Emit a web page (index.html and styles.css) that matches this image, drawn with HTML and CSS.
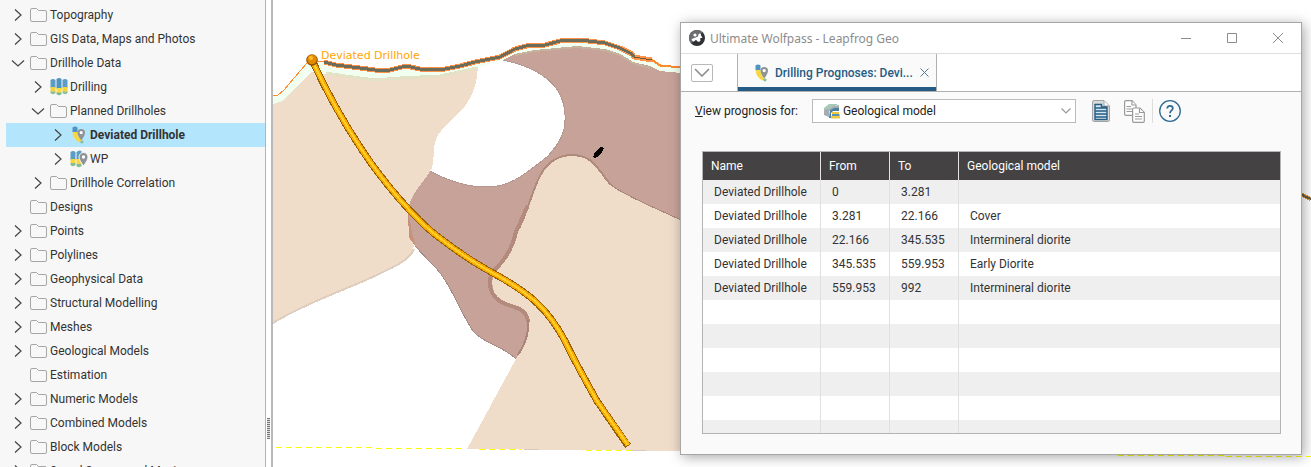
FILE: index.html
```html
<!DOCTYPE html>
<html lang="en">
<head>
  <meta charset="UTF-8" />
  <meta name="viewport" content="width=device-width,initial-scale=1.0"/>
  <title>Ultimate Wolfpass - Leapfrog Geo</title>
  <link rel="stylesheet" href="styles.css">
</head>
<body>
  <!-- Shared icons -->
  <svg class="icon-defs" aria-hidden="true">
    <symbol id="chevron" viewBox="0 0 14 14"><path d="M4 1.5 L10 7 L4 12.5" fill="none" stroke="#444" stroke-width="1.2"/></symbol>
    <symbol id="chevron-down" viewBox="0 0 14 14"><path d="M1 4.500 L7 10 L13 4.500" fill="none" stroke="#444" stroke-width="1.2"/></symbol>
    <symbol id="folder" viewBox="0 0 18 16"><path d="M2 1.500 H6.500 L8.500 3.500 H15 Q16.500 3.500 16.500 5 V13 Q16.500 14.500 15 14.500 H2 Q.5 14.500 .5 13 V3 Q.5 1.500 2 1.500Z" fill="none" stroke="#a6a6a6"/></symbol>
    <symbol id="drilling" viewBox="0 0 18 18">
      <path d="M.5 2 Q3 .2 5.500 2 V10 H.5Z M12.500 2 Q15 .2 17.500 2 V10 H12.500Z" fill="#5b9dc7"/>
      <path d="M.5 9 H5.500 V14 H.5Z M12.500 9 H17.500 V14 H12.500Z" fill="#f2d43c"/>
      <path d="M.5 13.500 H5.500 V15 Q3 17.500 .5 15Z M12.500 13.500 H17.500 V15 Q15 17.500 12.500 15Z" fill="#8cc0a0"/>
      <path d="M6.500 1 Q9 -.8 11.500 1 V11 H6.500Z" fill="#4f93c1"/>
      <path d="M6.500 10 H11.500 V15 H6.500Z" fill="#ffdc3c"/>
      <path d="M6.500 14.500 H11.500 V16 Q9 18.600 6.500 16Z" fill="#7db892"/>
    </symbol>
    <symbol id="planned" viewBox="0 0 18 18">
      <path d="M2.500 1.500 Q5 -.5 7.500 1.500 V6 H2.500Z" fill="#4f93c1"/>
      <path d="M2.500 6 H7.500 Q7.500 12 12 14 L10 16.500 Q2.500 13 2.500 6Z" fill="#f8d840"/>
      <path d="M10 15.500 L12.500 14.500 Q14.500 15.500 12.500 17.500 Q10.500 17.800 10 15.500Z" fill="#7fc09a"/>
      <path d="M11.200 14.500 Q7.500 9.500 7.500 6.700 A3.700 3.700 0 0 1 15 6.700 Q15 9.500 11.200 14.500Z" fill="#8f9396"/>
      <circle cx="11.200" cy="6.600" r="1.600" fill="#fff"/>
    </symbol>
    <symbol id="planned-group" viewBox="0 0 18 18">
      <path d="M.5 2 Q3 .2 5.500 2 V10 H.5Z M6.500 2 Q9 -.5 11.500 1 V9 H6.500Z" fill="#5b9dc7"/>
      <path d="M.5 9 H5.500 V13 H.5Z M6.500 9 H11.500 V14 H6.500Z" fill="#f5d63c"/>
      <path d="M.5 13 H5.500 V15 Q3 17.500 .5 15Z M6.500 14 H11.500 V16 Q9 18.500 6.500 16Z" fill="#85bd98"/>
      <path d="M13.500 16 Q9 10 9 7 A4.500 4.500 0 0 1 18 7 Q18 10 13.500 16Z" fill="#8f9396" stroke="#f7f7f7"/>
      <circle cx="13.500" cy="7" r="1.700" fill="#fff"/>
    </symbol>
  </svg>

  <div class="app">
    <!-- Project tree -->
    <ul class="tree">
      <li class="row"><button class="toggle" aria-label="Expand"><svg><use href="#chevron"/></svg></button><svg class="icon"><use href="#folder"/></svg>Topography</li>
      <li class="row"><button class="toggle" aria-label="Expand"><svg><use href="#chevron"/></svg></button><svg class="icon"><use href="#folder"/></svg>GIS Data, Maps and Photos</li>
      <li class="row"><button class="toggle" aria-label="Collapse"><svg><use href="#chevron-down"/></svg></button><svg class="icon"><use href="#folder"/></svg>Drillhole Data</li>
      <li class="row level-1"><button class="toggle" aria-label="Expand"><svg><use href="#chevron"/></svg></button><svg class="icon icon-tall"><use href="#drilling"/></svg>Drilling</li>
      <li class="row level-1"><button class="toggle" aria-label="Collapse"><svg><use href="#chevron-down"/></svg></button><svg class="icon"><use href="#folder"/></svg>Planned Drillholes</li>
      <li class="row level-2 selected"><button class="toggle" aria-label="Expand"><svg><use href="#chevron"/></svg></button><svg class="icon icon-tall"><use href="#planned"/></svg>Deviated Drillhole</li>
      <li class="row level-2"><button class="toggle" aria-label="Expand"><svg><use href="#chevron"/></svg></button><svg class="icon icon-tall"><use href="#planned-group"/></svg>WP</li>
      <li class="row level-1"><button class="toggle" aria-label="Expand"><svg><use href="#chevron"/></svg></button><svg class="icon"><use href="#folder"/></svg>Drillhole Correlation</li>
      <li class="row leaf"><svg class="icon"><use href="#folder"/></svg>Designs</li>
      <li class="row"><button class="toggle" aria-label="Expand"><svg><use href="#chevron"/></svg></button><svg class="icon"><use href="#folder"/></svg>Points</li>
      <li class="row"><button class="toggle" aria-label="Expand"><svg><use href="#chevron"/></svg></button><svg class="icon"><use href="#folder"/></svg>Polylines</li>
      <li class="row"><button class="toggle" aria-label="Expand"><svg><use href="#chevron"/></svg></button><svg class="icon"><use href="#folder"/></svg>Geophysical Data</li>
      <li class="row"><button class="toggle" aria-label="Expand"><svg><use href="#chevron"/></svg></button><svg class="icon"><use href="#folder"/></svg>Structural Modelling</li>
      <li class="row"><button class="toggle" aria-label="Expand"><svg><use href="#chevron"/></svg></button><svg class="icon"><use href="#folder"/></svg>Meshes</li>
      <li class="row"><button class="toggle" aria-label="Expand"><svg><use href="#chevron"/></svg></button><svg class="icon"><use href="#folder"/></svg>Geological Models</li>
      <li class="row leaf"><svg class="icon"><use href="#folder"/></svg>Estimation</li>
      <li class="row"><button class="toggle" aria-label="Expand"><svg><use href="#chevron"/></svg></button><svg class="icon"><use href="#folder"/></svg>Numeric Models</li>
      <li class="row"><button class="toggle" aria-label="Expand"><svg><use href="#chevron"/></svg></button><svg class="icon"><use href="#folder"/></svg>Combined Models</li>
      <li class="row"><button class="toggle" aria-label="Expand"><svg><use href="#chevron"/></svg></button><svg class="icon"><use href="#folder"/></svg>Block Models</li>
      <li class="row"><button class="toggle" aria-label="Expand"><svg><use href="#chevron"/></svg></button><svg class="icon"><use href="#folder"/></svg>Saved Scenes and Movies</li>
    </ul>

    <div class="splitter"><span class="grip"></span></div>

    <!-- 3D scene -->
    <div class="scene">
      <svg class="section" viewBox="273 0 1038 467" preserveAspectRatio="xMinYMin slice">
        <g shape-rendering="crispEdges">
          <!-- Early diorite -->
          <path d="M430 171 C450 182 467 187 487 187 C512 187 527 172 547 157 C560 143 566 132 565 115 C564 85 540 68 503 60 L515 52 L545 46 L577 44 L610 49 L635 60 L660 69 H690 V222 L560 300 L516 359 C499 343 485 345 473 331 C456 305 450 280 430 262 L415 246 L400 210Z" fill="#c7a299"/>
          <path d="M415 246 L430 262 C450 280 456 305 473 331 C485 345 499 343 516 359" fill="none" stroke="#a38a84"/>
          <path d="M430 171 C450 182 467 187 487 187 C512 187 527 172 547 157 C560 143 566 132 565 115 C564 85 540 68 503 60" fill="none" stroke="#b39790"/>
          <!-- Intermineral diorite, left -->
          <path d="M273 104 L283 101 L311 72 L330 75 L375 79 L400 77 L440 75 L478 67 C477 88 470 104 455 117 C440 131 434 136 434 152 C433 165 432 170 430 171 C424 183 409 194 408 212 L410 235 L414 246 C411 256 405 262 385 271 C355 287 310 300 273 323Z" fill="#efdcc9"/>
          <path d="M414 249 C411 256 405 262 385 271 C355 287 310 300 273 323" fill="none" stroke="#dfcdbd" stroke-width="2"/>
          <path d="M408 213 L412 235 L415 245 L410 238Z" fill="#c8917c" stroke="#c8917c"/>
          <!-- Intermineral diorite, right -->
          <path d="M690 225 C665 212 625 196 611 185 C597 169 594 156 571 156 C533 158 535 202 517 232 C514 252 506 261 494 273 C490 285 493 297 503 302 C515 307 529 308 529 322 C530 338 521 350 516 359 L467 449 L690 451Z" fill="#efdcc9"/>
          <path d="M681 220 C660 210 625 196 611 185" fill="none" stroke="#a88778"/>
          <path d="M611 185 C597 169 594 155 571 155 C533 157 535 202 517 232" fill="none" stroke="#b08a7a" stroke-width="2"/>
          <path d="M528 206 C523 215 520 224 516 232 C512 250 504 262 492 272 C487 285 491 297 503 303 C515 308 527 308 528 322" fill="none" stroke="#b38b7d" stroke-width="4"/>
          <path d="M528 320 C529 336 524 345 518 355" fill="none" stroke="#a98478" stroke-width="2"/>
          <!-- Cover -->
          <path d="M273 96 L278 95 L284 90 L305 64 L312 60 L332 64 L350 67 L375 70 L390 69 L406 66 L420 69 L445 69 L475 62 L500 57 L515 49 L530 45 L545 45 L560 41 L580 41 L605 44 L620 49 L633 56 L652 61 L661 66 L681 67 V73 L660 71 L650 66 L633 62 L620 54 L605 49 L577 46 L535 50 L515 54 L503 60 L478 67 L440 74 L400 77 L375 79 L330 75 L311 71 L283 101 L273 104Z" fill="#f1fff0"/>
          <path d="M326 73 L345 76 L375 80 L400 78 L440 76 L477 68" fill="none" stroke="#e4e2c6" stroke-width="3"/>
          <path d="M515 55 L535 51 L577 47 L605 50 L620 55 L633 63 L650 68" fill="none" stroke="#c6b19d" stroke-width="2"/>
          <!-- Topography -->
          <path d="M273 96 L278 95 L284 90 L300 71 L307 63 L312 61 L324 61" fill="none" stroke="#ff8b2c"/>
          <path d="M324 62 L336 65 L352 67 L375 70 L390 70 L406 66 L420 69 L445 69 L460 66 L475 62 L500 57 L515 49 L530 45 L545 45 L560 41 L580 40 L605 43 L620 48 L632 54 L634 57 L652 60" fill="none" stroke="#ff9248" stroke-width="5"/>
          <path d="M652 60 L661 66 L681 67" fill="none" stroke="#ff8b2c" stroke-width="2"/>
          <path d="M324 62 L336 65 L352 67 L375 70 L390 70 L406 66 L420 69 L445 69 L460 66 L475 62 L500 57 L515 49 L530 45 L545 45 L560 41 L580 40 L605 43 L620 48 L632 54 L634 57" fill="none" stroke="#6b6d5a" stroke-width="3"/>
          <path d="M634 57 L652 60" fill="none" stroke="#6b5a3a"/>
          <path d="M1301 194 L1304 196 L1311 199" fill="none" stroke="#e6a03a" stroke-width="4"/>
          <path d="M1301 194 L1304 196 L1311 199" fill="none" stroke="#5f5c4b" stroke-width="2"/>
          <!-- Drillhole trace -->
          <g fill="none">
            <path class="tube-edge" d="M312 60 C328 95 346 126 362 150 C384 183 414 218 437 236 C466 258 480 266 500 277 C530 294 548 309 565 341 C575 362 587 383 597 401 L628 446"/>
            <path class="tube-body" d="M312 60 C328 95 346 126 362 150 C384 183 414 218 437 236 C466 258 480 266 500 277 C530 294 548 309 565 341 C575 362 587 383 597 401 L628 445"/>
            <path class="tube-light" d="M312 60 C328 95 346 126 362 150 C384 183 414 218 437 236 C466 258 480 266 500 277 C530 294 548 309 565 341 C575 362 587 383 597 401 L628 445"/>
          </g>
          <ellipse cx="598.500" cy="152.500" rx="7" ry="2.700" transform="rotate(-48 598.500 152.500)" fill="#050303"/>
        </g>
        <circle cx="312" cy="60" r="5.800" fill="#8a4f00"/>
        <circle cx="312" cy="59.500" r="4.800" fill="#e28a00"/>
        <circle cx="311" cy="58" r="2" fill="#ffbe2a"/>
        <!-- Section extent -->
        <g class="extent">
          <path d="M276 447.500 H374"/>
          <path d="M376 448.500 H466"/>
          <path d="M479 449.500 H521"/>
          <path d="M586 450.500 H631"/>
          <path d="M1010 454.500 H1118"/>
          <path d="M1118 455.500 H1226"/>
          <path d="M1226 456.500 H1311"/>
        </g>
        <path d="M524 449.500 H539 M631 450.500 H646" fill="none" stroke="#d8c9ba"/>
        <text class="hole-label" x="321" y="59">Deviated Drillhole</text>
      </svg>

      <!-- Prognosis window -->
      <div class="window">
        <div class="titlebar">
          <svg class="logo" viewBox="0 0 16 16"><circle cx="8" cy="8" r="8" fill="#2f3134"/><path d="M0 8 A8 8 0 0 1 13.500 2.300 L2.300 13.500 A8 8 0 0 1 0 8Z" fill="#6b6d70"/><path d="M2.500 9.500 Q3.500 8 5.500 8 L9 6.500 Q9 4 10.500 3.500 Q12.500 3.500 12 5.500 L13.500 7.500 L11 8.500 L11.500 10.500 Q10.500 12.500 8.500 11.500 L7 9.800 L5 11.500 Q3 11.500 2.500 9.500Z" fill="#fff"/><circle cx="6" cy="5" r="1.600" fill="#fff"/></svg>
          <span class="title">Ultimate Wolfpass - Leapfrog Geo</span>
          <button class="win-btn" aria-label="Minimize"><svg viewBox="0 0 10 10"><path d="M0 5.500 H10"/></svg></button>
          <button class="win-btn" aria-label="Maximize"><svg viewBox="0 0 10 10"><path d="M.5 .5 H9.500 V9.500 H.5Z"/></svg></button>
          <button class="win-btn" aria-label="Close"><svg viewBox="0 0 10 10"><path d="M0 0 L10 10 M10 0 L0 10"/></svg></button>
        </div>

        <div class="tabs">
          <button class="tab-menu" aria-label="Tab list"><svg viewBox="0 0 16 9"><path d="M1 1 L8 8 L15 1" fill="none" stroke="#8c8c8c" stroke-width="1.600"/></svg></button>
          <div class="tab">
            <svg class="tab-icon"><use href="#planned"/></svg>
            <span>Drilling Prognoses: Devi...</span>
            <button class="tab-close" aria-label="Close tab"><svg viewBox="0 0 9 9"><path d="M.5 .5 L8.500 8.500 M8.500 .5 L.5 8.500" stroke="#4d7b9b" fill="none"/></svg></button>
          </div>
        </div>

        <div class="toolbar">
          <label for="prognosis"><u>V</u>iew prognosis for:</label>
          <div class="select-box">
            <svg class="model-icon" viewBox="0 0 16 16"><path d="M0 5 L5 1 H14 L10 3.500 L4 6 V8 H0Z" fill="#a5c9b6"/><path d="M0 7 L4 6 L10 3 L15 2 V5 L8 6 L5 8 V14 L0 12Z" fill="#a3adb3"/><path d="M6 7 L10 5 H15 V8 H9 L7 10 V15 H5Z" fill="#4f7f9f"/><path d="M8 9 H15 V11 H8Z M7 13 H16 V15.500 H7Z" fill="#f0c83a"/><path d="M8 11 H15.500 V13 H8Z" fill="#5b93b8"/></svg>
            <select id="prognosis"><option>Geological model</option></select>
            <svg class="select-arrow" viewBox="0 0 10 6"><path d="M.5 .5 L5 5 L9.500 .5" fill="none" stroke="#999" stroke-width="1.200"/></svg>
          </div>
          <button class="tool" aria-label="Table"><svg width="18" height="22" viewBox="0 0 18 22"><path d="M2 .5 H12 L17.500 6 V20 Q17.500 21.500 16 21.500 H2 Q.5 21.500 .5 20 V2 Q.5 .5 2 .5Z" fill="#d9dbdc" stroke="#a3a3a3"/><path d="M12 1 V6 H17" fill="#fff" stroke="#a3a3a3"/><path d="M3 4.500 H9.500 V7 H15 V19.500 H3Z" fill="#d3e6f2" stroke="#265c84" stroke-width="1.400"/><path d="M3 8 H15 M3 11 H15 M3 14 H15 M3 17 H15" stroke="#265c84" stroke-width="1.500"/></svg></button>
          <button class="tool tool-copy" aria-label="Copy"><svg width="21" height="23" viewBox="0 0 21 23"><g fill="#fff" stroke="#999" stroke-width="1.200"><path d="M2 .6 H8 L12 5 V14 Q12 15.400 10.500 15.400 H2 Q.6 15.400 .6 14 V2 Q.6 .6 2 .6Z"/><path d="M8 1 V5 H12 M2.500 6.500 H7 M2.500 9 H8 M2.500 11.500 H8"/><path d="M10 8 H16 L20.300 12.500 V21 Q20.300 22.300 19 22.300 H10 Q8.600 22.300 8.600 21 V9.500 Q8.600 8 10 8Z"/><path d="M15.500 8.500 V12.500 H20 M11 14 H15 M11 16.500 H18 M11 19 H18"/></g></svg></button>
          <span class="divider"></span>
          <button class="tool" aria-label="Help"><svg width="22" height="22" viewBox="0 0 22 22" fill="none" stroke="#2f6b93"><circle cx="11" cy="11" r="10.300" stroke-width="1.300"/><path d="M8.200 8.500 Q8.300 5.800 11 5.800 Q13.800 5.800 13.800 8.200 Q13.800 9.500 12.300 10.600 Q11 11.600 11 13.300" stroke-width="1.700"/><path d="M11 15 V17" stroke-width="2"/></svg></button>
        </div>

        <div class="table-wrap">
          <table>
            <thead>
              <tr><th class="col-name">Name</th><th class="col-num">From</th><th class="col-num">To</th><th>Geological model</th></tr>
            </thead>
            <tbody>
              <tr><td>Deviated Drillhole</td><td>0</td><td>3.281</td><td></td></tr>
              <tr><td>Deviated Drillhole</td><td>3.281</td><td>22.166</td><td>Cover</td></tr>
              <tr><td>Deviated Drillhole</td><td>22.166</td><td>345.535</td><td>Intermineral diorite</td></tr>
              <tr><td>Deviated Drillhole</td><td>345.535</td><td>559.953</td><td>Early Diorite</td></tr>
              <tr><td>Deviated Drillhole</td><td>559.953</td><td>992</td><td>Intermineral diorite</td></tr>
              <tr><td></td><td></td><td></td><td></td></tr>
              <tr><td></td><td></td><td></td><td></td></tr>
              <tr><td></td><td></td><td></td><td></td></tr>
              <tr><td></td><td></td><td></td><td></td></tr>
              <tr><td></td><td></td><td></td><td></td></tr>
              <tr><td></td><td></td><td></td><td></td></tr>
            </tbody>
          </table>
        </div>
      </div>
    </div>
  </div>
</body>
</html>
```
FILE: styles.css
```css
/* ---------- Global Styles ---------- */
* {
  box-sizing: border-box;
}
body {
  margin: 0;
  background: #fff;
  color: #333;
  font-family: Roboto, sans-serif;
  font-size: 12px;
  overflow: hidden;
}
button {
  background: none;
  border: none;
  padding: 0;
  cursor: pointer;
}
svg {
  display: block;
}
.icon-defs {
  position: absolute;
  width: 0;
  height: 0;
}
.app {
  display: flex;
  height: 100vh;
}

/* ---------- Project Tree ---------- */
.tree {
  width: 266px;
  flex-shrink: 0;
  margin: 0;
  padding: 3px 0 0 6px;
  list-style: none;
  background: #f7f7f7;
  border-right: 1px solid #b4b4b4;
  overflow: hidden;
}
.row {
  display: flex;
  align-items: center;
  height: 24px;
  padding-left: 5px;
  white-space: nowrap;
}
.level-1 {
  padding-left: 25px;
}
.level-2 {
  padding-left: 45px;
}
.leaf {
  padding-left: 24px;
}
.selected {
  background: #b3e5fc;
  font-weight: bold;
}
.toggle {
  width: 14px;
  height: 14px;
  margin-right: 5px;
}
.toggle svg {
  width: 14px;
  height: 14px;
}
.icon {
  width: 18px;
  height: 16px;
  margin-right: 2px;
}
.icon-tall {
  height: 18px;
}

/* ---------- Splitter ---------- */
.splitter {
  display: flex;
  align-items: flex-end;
  width: 7px;
  flex-shrink: 0;
  padding: 0 0 28px 1px;
  border-right: 2px solid #b9b9b9;
}
.grip {
  width: 3px;
  height: 21px;
  background: repeating-linear-gradient(#777 0 1px, #ddd 1px 2px);
}

/* ---------- Scene ---------- */
.scene {
  position: relative;
  flex: 1;
  overflow: hidden;
}
.section {
  width: 100%;
  height: 100%;
}
.tube-edge {
  stroke: #946000;
  stroke-width: 7;
}
.tube-body {
  stroke: #f8aa00;
  stroke-width: 5;
}
.tube-light {
  stroke: #ffcf28;
  stroke-width: 2;
}
.extent {
  fill: none;
  stroke: #ffff00;
  stroke-dasharray: 6 4;
}
.hole-label {
  font-family: "DejaVu Sans", sans-serif;
  font-size: 11px;
  fill: #ffa500;
}

/* ---------- Window ---------- */
.window {
  position: absolute;
  top: 22px;
  right: 9px;
  bottom: 12px;
  width: 622px;
  display: flex;
  flex-direction: column;
  background: #fafafa;
  border: 1px solid #a6a6a6;
  box-shadow: 2px 2px 12px rgba(0, 0, 0, 0.35);
}
.titlebar {
  display: flex;
  align-items: center;
  height: 31px;
  padding-left: 8px;
  background: #fff;
  border-bottom: 1px solid #ddd;
}
.logo {
  width: 16px;
  height: 16px;
  margin-right: 5px;
}
.title {
  flex: 1;
  color: #8c8c8c;
  font-family: "Noto Sans", sans-serif;
}
.win-btn {
  width: 46px;
  height: 30px;
  display: flex;
  align-items: center;
  justify-content: center;
}
.win-btn svg {
  width: 10px;
  height: 10px;
  fill: none;
  stroke: #8c8c8c;
}

/* ---------- Tabs ---------- */
.tabs {
  display: flex;
  align-items: center;
  height: 38px;
  padding-left: 10px;
  background: #fff;
  border-bottom: 1px solid #b0b0b0;
}
.tab-menu {
  width: 22px;
  height: 18px;
  display: flex;
  align-items: center;
  justify-content: center;
  border: 1px solid #b8b8b8;
  border-radius: 2px;
}
.tab-menu svg {
  width: 16px;
  height: 9px;
}
.tab {
  display: flex;
  align-items: center;
  align-self: stretch;
  width: 200px;
  margin-left: 24px;
  padding-left: 15px;
  background: #fafafa;
  border: 1px solid #b0b0b0;
  border-width: 0 1px;
  box-shadow: inset 0 -4px #265c84;
  color: #265c84;
  font-weight: 500;
}
.tab span {
  flex: 1;
  white-space: nowrap;
}
.tab-icon {
  width: 18px;
  height: 18px;
  margin-right: 4px;
}
.tab-close {
  margin-right: 7px;
}
.tab-close svg {
  width: 9px;
  height: 9px;
}

/* ---------- Toolbar ---------- */
.toolbar {
  display: flex;
  align-items: center;
  height: 38px;
  padding-left: 14px;
  color: #222;
}
.select-box {
  position: relative;
  width: 264px;
  margin: 0 16px 0 14px;
}
.select-box select {
  display: block;
  width: 100%;
  height: 24px;
  padding: 0 24px 0 30px;
  appearance: none;
  background: #fff;
  border: 1px solid #bbb;
  border-radius: 0;
  color: #222;
  font: inherit;
}
.model-icon {
  position: absolute;
  left: 12px;
  top: 4px;
  width: 16px;
  height: 16px;
}
.select-arrow {
  position: absolute;
  right: 5px;
  top: 9px;
  width: 10px;
  height: 6px;
}
.tool-copy {
  margin: 0 7px 0 14px;
}
.divider {
  width: 1px;
  height: 24px;
  margin-right: 6px;
  background: #ddd;
}

/* ---------- Table ---------- */
.table-wrap {
  flex: 1;
  min-height: 0;
  margin: 21px 20px 20px 21px;
  background: #fff;
  border: 1px solid #b4b4b4;
  overflow: hidden;
}
table {
  width: 100%;
  table-layout: fixed;
  border-collapse: separate;
  border-spacing: 0;
}
th {
  height: 28px;
  padding: 0 8px;
  background: #444243;
  border-right: 1px solid #e4e4e4;
  color: #fff;
  font-weight: normal;
  text-align: left;
}
td {
  height: 24px;
  padding: 0 0 0 11px;
  border-right: 1px solid #e0e0e0;
  white-space: nowrap;
}
th:last-child, td:last-child {
  border-right: none;
}
tbody tr:nth-child(odd) {
  background: #efefef;
}
.col-name {
  width: 118px;
}
.col-num {
  width: 69px;
}
```
